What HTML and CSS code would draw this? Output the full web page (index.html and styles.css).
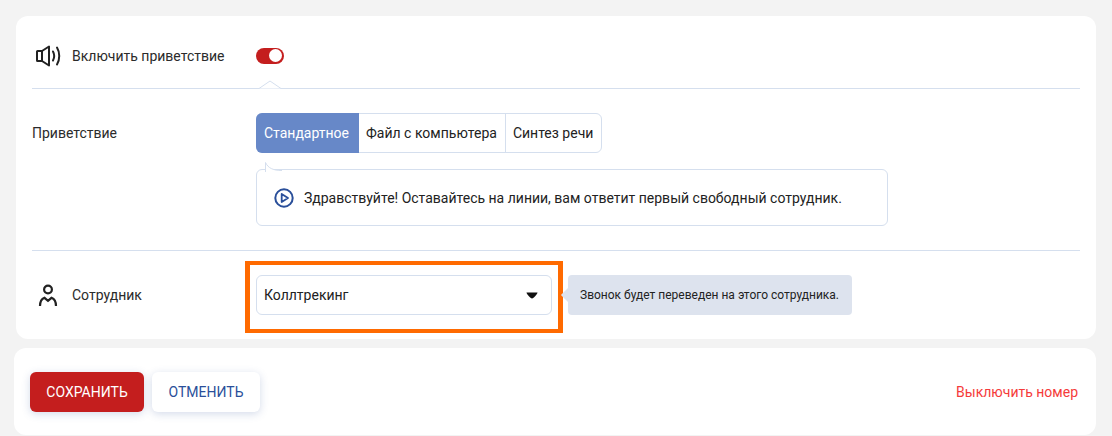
FILE: index.html
```html
<!DOCTYPE html>
<html lang="ru">
<head>
<meta charset="utf-8">
<title>Приветствие</title>
<link rel="stylesheet" href="styles.css">
</head>
<body>
<section class="card settings">
  <div class="row row-toggle">
    <div class="label">
      <svg class="icon" width="28" height="24" viewBox="0 0 28 24" fill="none" stroke="#222" stroke-width="2">
        <path d="M3.500 7H8V17H3.500A0.500 0.500 0 0 1 3 16.500V7.500A0.500 0.500 0 0 1 3.500 7Z"/>
        <path d="M8 7L15 2.500V21.500L8 17" stroke-linejoin="round"/>
        <path d="M19 7.500C20.600 10.500 20.600 13.500 19 16.500" stroke-linecap="round"/>
        <path d="M23 3.500C26 8.500 26 15.500 23 20.500" stroke-linecap="round"/>
      </svg>
      <span>Включить приветствие</span>
    </div>
    <span class="switch"><span class="knob"></span></span>
    <svg class="notch" width="26" height="9" viewBox="0 0 26 9"><path d="M0 8.500H2L13 1L24 8.500H26" fill="#fff" stroke="#d5dfee"/></svg>
  </div>
  <div class="row row-greeting">
    <div class="label plain">Приветствие</div>
    <div class="greeting">
      <div class="tabs">
        <span class="tab active">Стандартное</span>
        <span class="tab">Файл с компьютера</span>
        <span class="tab">Синтез речи</span>
      </div>
      <div class="bubble">
        <svg class="bubble-tail" width="20" height="10" viewBox="0 0 20 10"><path d="M0.500 10V0.500C3 6 8 8.500 17 8.500" fill="#fff" stroke="#d5dfee"/></svg>
        <svg width="20" height="20" viewBox="0 0 20 20" fill="none" stroke="#2a4f9a" stroke-width="2">
          <circle cx="10" cy="10" r="8.700"/>
          <path d="M7.700 6L14 10L7.700 14Z" stroke-width="1.800" stroke-linejoin="round"/>
        </svg>
        <span>Здравствуйте! Оставайтесь на линии, вам ответит первый свободный сотрудник.</span>
      </div>
    </div>
  </div>
  <div class="row row-employee">
    <div class="label">
      <svg class="icon person" width="20" height="22" viewBox="0 0 20 22" fill="none" stroke="#222" stroke-width="2.200">
        <circle cx="10" cy="5.500" r="3.900"/>
        <path d="M2 22C2 17.500 3.500 15 6.500 13.800L10 16.800L13.500 13.800C16.500 15 18 17.500 18 22"/>
      </svg>
      <span>Сотрудник</span>
    </div>
    <div class="select">
      <span>Коллтрекинг</span>
      <svg width="12" height="7" viewBox="0 0 12 7"><path d="M0.500 0.500H11.500C11.500 2 7.500 6.500 6 6.500C4.500 6.500 0.500 2 0.500 0.500Z" fill="#111"/></svg>
      <span class="highlight"></span>
    </div>
    <div class="hint">Звонок будет переведен на этого сотрудника.</div>
  </div>
</section>
<section class="card actions">
  <div class="buttons">
    <button class="btn primary" type="button">СОХРАНИТЬ</button>
    <button class="btn secondary" type="button">ОТМЕНИТЬ</button>
  </div>
  <a class="disable" href="#">Выключить номер</a>
</section>
</body>
</html>
```
FILE: styles.css
```css
* { box-sizing: border-box; }
html, body { height: 100%; }
body {
  margin: 0;
  padding: 16px 16px 0 14px;
  background: #f3f3f3;
  font-family: Roboto, "Liberation Sans", sans-serif;
  font-size: 14px;
  line-height: 20px;
  color: #2b2b2b;
  overflow: hidden;
}
.card { background: #fff; }
.settings {
  margin-left: 2px;
  height: 323px;
  padding: 0 16px;
  border-radius: 12px;
}
.row { display: flex; border-bottom: 1px solid #d5dfee; }
.row:last-child { border-bottom: 0; }
.label { width: 224px; flex: none; display: flex; align-items: center; gap: 12px; }
.icon { flex: none; margin-left: 2px; }
.row-toggle { position: relative; height: 73px; align-items: center; padding-top: 7px; }
.row-toggle .icon { margin-left: 2px; margin-right: -2px; }
.switch {
  width: 28px; height: 16px; border-radius: 8px; background: #c41e1e;
  display: flex; align-items: center; justify-content: flex-end; padding-right: 2px;
}
.knob { width: 13px; height: 13px; border-radius: 50%; background: #fff; }
.notch { position: absolute; left: 225px; bottom: -1px; }
.row-greeting { height: 162px; padding-top: 24px; }
.plain { height: 40px; align-items: center; }
.greeting { display: flex; flex-direction: column; gap: 16px; }
.tabs {
  display: flex; height: 40px; width: 346px;
  border: 1px solid #d5dfee; border-radius: 6px;
}
.tab {
  display: flex; align-items: center; padding: 0 8px 0 7px; border-left: 1px solid #d5dfee;
  white-space: nowrap; color: #222;
}
.tab:first-child { border-left: 0; }
.tab.active {
  margin: -1px 0 -1px -1px; padding: 0 10px 0 8px; height: 40px;
  background: #6788c8; color: #fff; border-radius: 6px 0 0 6px;
}
.tab.active + .tab { border-left: 0; }
.bubble {
  position: relative; width: 632px; height: 57px;
  display: flex; align-items: center; gap: 10px; padding-left: 17px;
  border: 1px solid #d5dfee; border-radius: 6px; background: #fff; color: #222;
}
.bubble-tail { position: absolute; left: 8px; top: -8px; }
.row-employee { height: 88px; align-items: center; }
.person { margin-left: 6px; margin-right: 2px; }
.select {
  position: relative; width: 296px; height: 40px; flex: none;
  display: flex; align-items: center; justify-content: space-between;
  padding: 0 13px 0 7px;
  border: 1px solid #d5dfee; border-radius: 6px; background: #fff; color: #222;
}
.highlight {
  position: absolute; left: -12px; top: -15px; width: 318px; height: 72px;
  border: solid #ff6a00; border-width: 4px 5px;
}
.hint {
  position: relative; margin-left: 16px; height: 40px; width: 284px;
  display: flex; align-items: center; padding-left: 12px;
  background: #dde3ee; border-radius: 4px; font-size: 12px; color: #222;
}
.hint::before {
  content: ""; position: absolute; left: -5px; top: 15px; width: 10px; height: 10px;
  background: #dde3ee; transform: rotate(45deg);
}
.actions {
  margin-top: 9px; height: 87px; padding: 0 18px 0 16px;
  border-radius: 12px; display: flex; align-items: center; justify-content: space-between;
}
.buttons { display: flex; gap: 8px; }
.btn {
  height: 40px; border: 0; border-radius: 6px; font: inherit; cursor: pointer;
  padding: 0; box-shadow: 0 2px 8px rgba(60, 90, 160, .22);
}
.primary { width: 114px; background: #c41e1e; color: #fff; }
.secondary { width: 108px; background: #fff; color: #2a4f9a; }
.disable { color: #f53b3b; text-decoration: none; }
```
